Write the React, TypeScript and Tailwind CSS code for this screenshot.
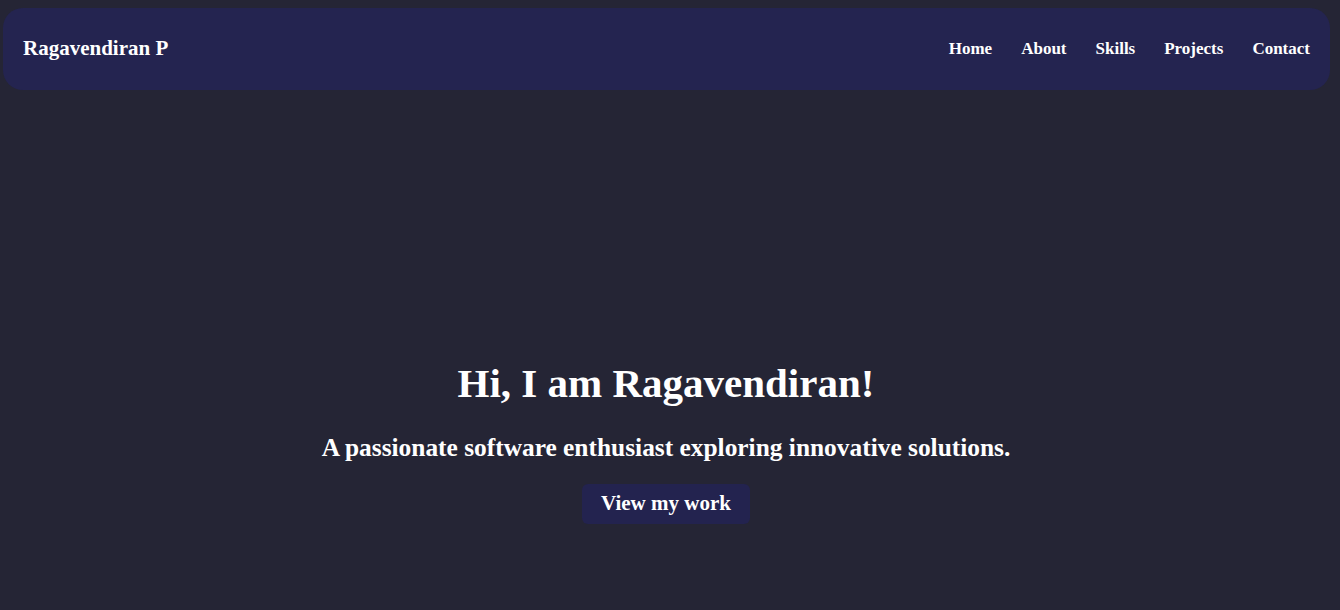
import * as React from "react"

const links = ["Home", "About", "Skills", "Projects", "Contact"]

export default function App() {
  return (
    <div
      className="min-h-screen bg-[#252535] text-white"
      style={{ fontFamily: '"Liberation Serif", "DejaVu Serif", serif' }}
    >
      <div className="px-[3px] pt-2 pr-[10px]">
        <nav className="flex h-[82px] items-center justify-between rounded-[20px] bg-[#242450] pl-5 pr-5">
          <span className="text-[21px] font-bold">Ragavendiran P</span>
          <ul className="flex items-center gap-[29px] text-[17px] font-bold">
            {links.map((l) => (
              <li key={l}>{l}</li>
            ))}
          </ul>
        </nav>
      </div>

      {/* Hero */}
      <section className="flex flex-col items-center pr-2 pt-[269px] text-center">
        <h1 className="text-[41px] font-bold leading-[48px]">Hi, I am Ragavendiran!</h1>
        <p className="mt-[24px] text-[25.4px] font-bold leading-[32px]">
          A passionate software enthusiast exploring innovative solutions.
        </p>
        <button className="mt-[21px] h-[40px] w-[168px] rounded-md bg-[#23234f] text-[21px] font-bold">
          View my work
        </button>
      </section>
    </div>
  )
}
